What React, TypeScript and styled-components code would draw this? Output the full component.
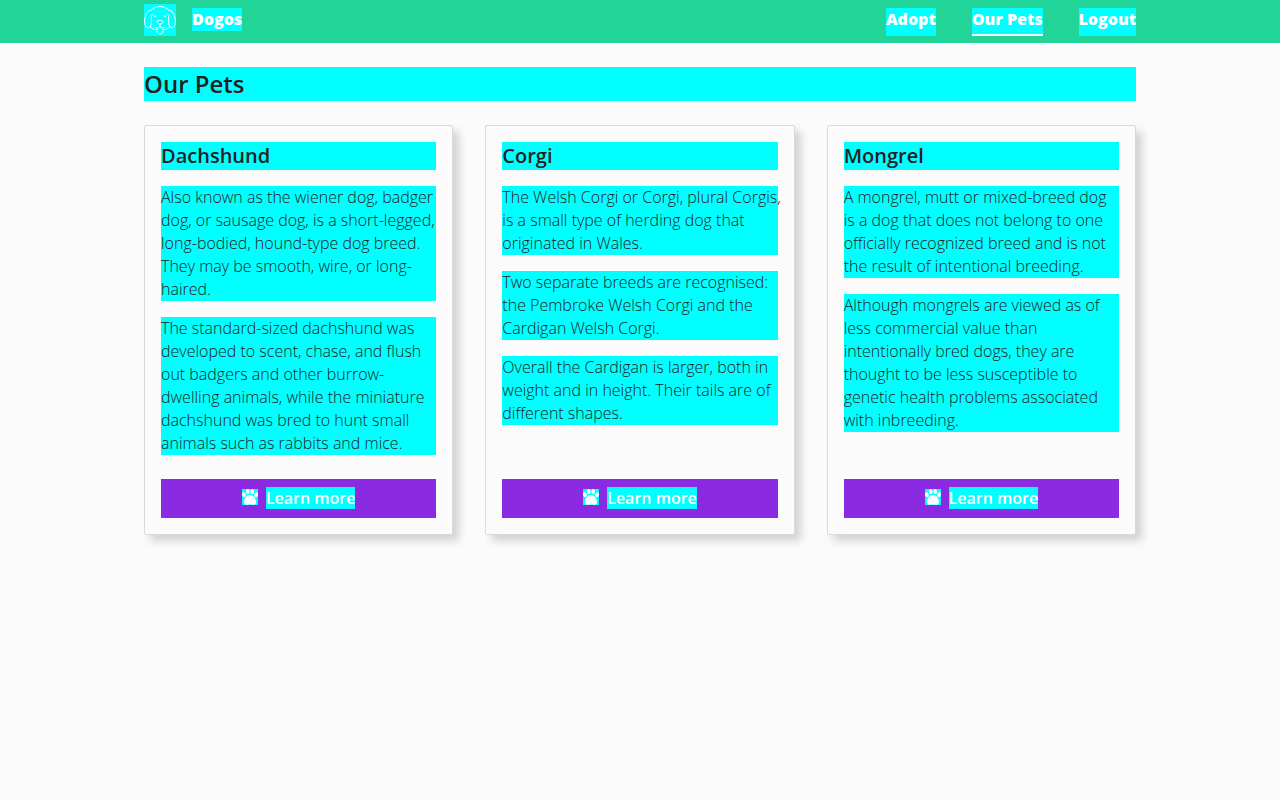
import React from "react";
import styled, { createGlobalStyle } from "styled-components";

const GlobalStyle = createGlobalStyle`
  *, *::before, *::after { box-sizing: border-box; }
  body {
    margin: 0;
    background: #fbfbfb;
    color: #222;
    font-family: "Open Sans", sans-serif;
    font-size: 16px;
    font-weight: 300;
    line-height: 23px;
  }
`;

const Header = styled.header`
  background: #21d598;
`;

const Container = styled.div`
  max-width: 1024px;
  margin: 0 auto;
  padding: 0 16px;
`;

const HeaderRow = styled(Container)`
  display: flex;
  align-items: flex-start;
  justify-content: space-between;
  height: 43px;
`;

const Brand = styled.a`
  display: flex;
  align-items: flex-start;
  gap: 16px;
  padding-top: 4px;
  color: #fff;
  font-weight: 800;
  text-decoration: none;
`;

const Logo = styled.svg`
  display: block;
  width: 32px;
  height: 32px;
  background: #0ff;
`;

const BrandName = styled.span`
  margin-top: 4px;
  background: #0ff;
`;

const Nav = styled.nav`
  display: flex;
  gap: 36px;
  padding-top: 8px;
`;

const NavLink = styled.a<{ $active?: boolean }>`
  height: 28px;
  border-bottom: 2px solid ${(p) => (p.$active ? "#fff" : "transparent")};
  background: #0ff;
  color: #fff;
  font-weight: 800;
  text-decoration: none;
`;

const Main = styled(Container).attrs({ as: "main" })`
  padding-top: 24px;
  padding-bottom: 24px;
`;

const PageTitle = styled.h1`
  margin: 0 0 24px;
  background: #0ff;
  font-size: 24px;
  font-weight: 600;
  line-height: 34px;
`;

const CardGrid = styled.div`
  display: grid;
  grid-template-columns: repeat(auto-fit, minmax(260px, 1fr));
  gap: 32px;
`;

const Card = styled.article`
  display: flex;
  flex-direction: column;
  padding: 16px;
  border: 1px solid #dadada;
  border-radius: 2px;
  background: #fbfbfb;
  box-shadow: 6px 6px 8px 0 #d2d2d2;
`;

const CardTitle = styled.h2`
  margin: 0;
  background: #0ff;
  font-size: 20px;
  font-weight: 600;
  line-height: 28px;
`;

const CardText = styled.p`
  margin: 16px 0 0;
  background: #0ff;
`;

const Hanging = styled.span`
  display: block;
  margin-right: -4px;
`;

const CardFooter = styled.div`
  margin-top: auto;
  padding-top: 24px;
`;

const LearnButton = styled.button`
  display: flex;
  align-items: flex-start;
  justify-content: center;
  gap: 8px;
  width: 100%;
  height: 39px;
  padding: 8px 16px;
  border: 0;
  background: #8a2be2;
  color: #fff;
  font: 600 16px/22px "Open Sans", sans-serif;
  cursor: pointer;
`;

const ButtonLabel = styled.span`
  background: #0ff;
`;

const Paw = styled.svg`
  display: block;
  width: 16px;
  height: 16px;
  margin-top: 2px;
  background: #0ff;
`;

const DogLogo = () => (
  <Logo viewBox="0 0 32 32" fill="none" stroke="#fff" strokeWidth="1" strokeLinecap="round" strokeLinejoin="round" aria-hidden="true">
    <path d="M7.500 5.800C9.800 3.600 12.600 2.600 16 2.600s6.200 1 8.500 3.200" />
    <path d="M7.500 5.800C3.600 6.300.7 11.500.6 17c0 3.200 1.200 6.800 3.600 6.800 2.700 0 3.300-4.300 3.100-7.800-.1-2.200 0-4 .9-5.500" />
    <path d="M24.500 5.800c3.900.5 6.800 5.700 6.900 11.200 0 3.200-1.200 6.800-3.600 6.800-2.700 0-3.300-4.300-3.100-7.800.1-2.200 0-4-.9-5.500" />
    <path d="M6.500 22.500c1.200 2.400 3.400 3.500 6.200 3M25.500 22.500c-1.200 2.400-3.400 3.500-6.200 3" />
    <path d="M13 17.200c1.500-1 4.500-1 6 0 .5 1.500-1.300 3-3 3s-3.500-1.500-3-3z" />
    <path d="M16 20.200v2.800M16 23c-1.500 1.400-3.800 1.500-5 .2M16 23c1.500 1.400 3.800 1.500 5 .2" />
    <path d="M13 24.200V27c0 1.700 1.300 3 3 3s3-1.300 3-3v-2.800" />
    <circle cx="11" cy="12.200" r=".5" fill="#fff" />
    <circle cx="21" cy="12.200" r=".5" fill="#fff" />
  </Logo>
);

const PawIcon = () => (
  <Paw viewBox="0 0 16 16" fill="#fff" aria-hidden="true">
    <ellipse cx="5.800" cy="2.500" rx="1.800" ry="2.500" />
    <ellipse cx="10.200" cy="2.500" rx="1.800" ry="2.500" />
    <ellipse cx="1.900" cy="5.600" rx="1.800" ry="2.400" transform="rotate(-18 1.900 5.600)" />
    <ellipse cx="14.100" cy="5.600" rx="1.800" ry="2.400" transform="rotate(18 14.100 5.600)" />
    <path d="M8 6C4.500 6 2 9.500 2 13c0 1.900 1 2.800 2.600 2.800 1.300 0 2-.2 3.400-.2s2.100.2 3.400.2c1.600 0 2.600-.9 2.600-2.800C14 9.500 11.500 6 8 6z" />
  </Paw>
);

const pets = [
  {
    name: "Dachshund",
    text: [
      "Also known as the wiener dog, badger dog, or sausage dog, is a short-legged, long-bodied, hound-type dog breed. They may be smooth, wire, or long-haired.",
      "The standard-sized dachshund was developed to scent, chase, and flush out badgers and other burrow-dwelling animals, while the miniature dachshund was bred to hunt small animals such as rabbits and mice.",
    ],
  },
  {
    name: "Corgi",
    text: [
      "The Welsh Corgi or Corgi, plural Corgis, is a small type of herding dog that originated in Wales.",
      "Two separate breeds are recognised: the Pembroke Welsh Corgi and the Cardigan Welsh Corgi.",
      "Overall the Cardigan is larger, both in weight and in height. Their tails are of different shapes.",
    ],
  },
  {
    name: "Mongrel",
    text: [
      "A mongrel, mutt or mixed-breed dog is\u00a0a dog that does not belong to one officially recognized breed and is not the result of intentional breeding.",
      "Although mongrels are viewed as of less commercial value than intentionally bred dogs, they are thought to be less susceptible to genetic health problems associated with inbreeding.",
    ],
  },
];

export default function App() {
  return (
    <>
      <GlobalStyle />
      <Header>
        <HeaderRow>
          <Brand href="#home">
            <DogLogo />
            <BrandName>Dogos</BrandName>
          </Brand>
          <Nav>
            <NavLink href="#adopt">Adopt</NavLink>
            <NavLink href="#pets" $active aria-current="page">Our Pets</NavLink>
            <NavLink href="#logout">Logout</NavLink>
          </Nav>
        </HeaderRow>
      </Header>
      <Main>
        <PageTitle>Our Pets</PageTitle>
        <CardGrid>
          {pets.map((pet) => (
            <Card key={pet.name}>
              <CardTitle>{pet.name}</CardTitle>
              {pet.text.map((t) => (
                <CardText key={t}>
                  <Hanging>{t}</Hanging>
                </CardText>
              ))}
              <CardFooter>
                <LearnButton type="button">
                  <PawIcon />
                  <ButtonLabel>Learn more</ButtonLabel>
                </LearnButton>
              </CardFooter>
            </Card>
          ))}
        </CardGrid>
      </Main>
    </>
  );
}
